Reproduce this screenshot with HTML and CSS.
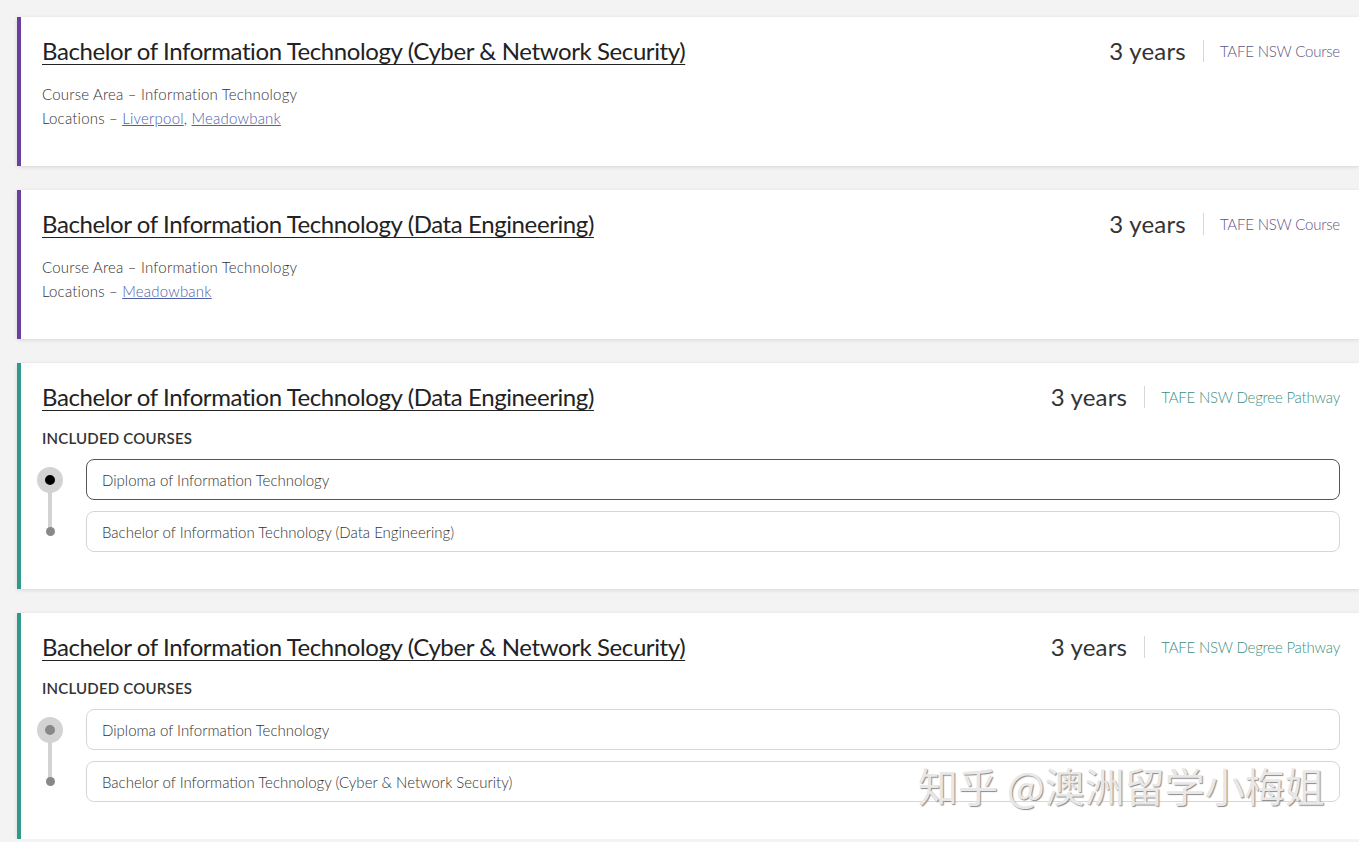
FILE: index.html
```html
<!DOCTYPE html>
<html lang="en">
<head>
    <meta charset="UTF-8">
    <meta name="viewport" content="width=device-width, initial-scale=1.0">
    <title>Courses - Information Technology</title>
    <link rel="stylesheet" href="styles.css">
</head>
<body>
    <div class="lista-cursos">

        <div class="card curso">
            <div class="card-topo">
                <a href="#" class="titulo">Bachelor of Information Technology (Cyber &amp; Network Security)</a>
                <div class="meta">
                    <span class="duracao">3 years</span>
                    <span class="tipo">TAFE NSW Course</span>
                </div>
            </div>
            <div class="detalhes">
                <p>Course Area – Information Technology</p>
                <p>Locations – <a href="#">Liverpool</a>, <a href="#">Meadowbank</a></p>
            </div>
        </div>

        <div class="card curso">
            <div class="card-topo">
                <a href="#" class="titulo">Bachelor of Information Technology (Data Engineering)</a>
                <div class="meta">
                    <span class="duracao">3 years</span>
                    <span class="tipo">TAFE NSW Course</span>
                </div>
            </div>
            <div class="detalhes">
                <p>Course Area – Information Technology</p>
                <p>Locations – <a href="#">Meadowbank</a></p>
            </div>
        </div>

        <div class="card caminho">
            <div class="card-topo">
                <a href="#" class="titulo">Bachelor of Information Technology (Data Engineering)</a>
                <div class="meta">
                    <span class="duracao">3 years</span>
                    <span class="tipo">TAFE NSW Degree Pathway</span>
                </div>
            </div>
            <h3 class="incluidos">Included courses</h3>
            <ul class="etapas">
                <li class="etapa ativa">
                    <span class="marcador"></span>
                    <div class="etapa-caixa">Diploma of Information Technology</div>
                </li>
                <li class="etapa">
                    <span class="marcador"></span>
                    <div class="etapa-caixa">Bachelor of Information Technology (Data Engineering)</div>
                </li>
            </ul>
        </div>

        <div class="card caminho">
            <div class="card-topo">
                <a href="#" class="titulo">Bachelor of Information Technology (Cyber &amp; Network Security)</a>
                <div class="meta">
                    <span class="duracao">3 years</span>
                    <span class="tipo">TAFE NSW Degree Pathway</span>
                </div>
            </div>
            <h3 class="incluidos">Included courses</h3>
            <ul class="etapas">
                <li class="etapa">
                    <span class="marcador"></span>
                    <div class="etapa-caixa">Diploma of Information Technology</div>
                </li>
                <li class="etapa">
                    <span class="marcador"></span>
                    <div class="etapa-caixa">Bachelor of Information Technology (Cyber &amp; Network Security)</div>
                </li>
            </ul>
        </div>

    </div>

    <div class="marca-agua">知乎 @澳洲留学小梅姐</div>
</body>
</html>
```

FILE: styles.css
```css
:root {
    --fundo: #f3f3f3;
    --branco: #ffffff;
    --texto: #222222;
    --texto-leve: #333333;
    --roxo: #6b3fa0;
    --roxo-leve: #5d5585;
    --verde: #2e9a8b;
    --verde-leve: #3d8f80;
    --link: #4f5fa8;
    --cinza-borda: #d6d6d6;
}

body {
    margin: 0;
    background-color: var(--fundo);
    font-family: Lato, "Noto Sans", sans-serif;
    color: var(--texto);
    overflow: hidden;
}

.lista-cursos {
    display: flex;
    flex-direction: column;
    gap: 24px;
    padding: 17px 0 0 17px;
}

.card {
    background-color: var(--branco);
    border-left: 4px solid var(--roxo);
    box-shadow: 0 1px 4px rgba(0, 0, 0, 0.12);
    padding: 20px 19px 36px 21px;
}

.card.caminho {
    border-left-color: var(--verde);
    padding-bottom: 37px;
}

.card-topo {
    display: flex;
    justify-content: space-between;
    align-items: center;
    height: 27px;
}

.titulo {
    color: var(--texto);
    font-size: 24px;
    letter-spacing: -0.4px;
    text-decoration: underline;
    text-decoration-thickness: 1px;
    text-underline-offset: 4px;
}

.meta {
    display: flex;
    align-items: center;
}

.duracao {
    font-size: 24px;
    color: #333;
    padding-right: 17px;
    border-right: 1px solid #d8d8d8;
    line-height: 22px;
    letter-spacing: 0.2px;
}

.tipo {
    font-size: 15px;
    font-weight: 300;
    letter-spacing: -0.2px;
    padding-left: 16px;
    color: var(--roxo-leve);
}

.caminho .tipo {
    color: var(--verde-leve);
}

.detalhes {
    margin-top: 18px;
    font-size: 15px;
    font-weight: 300;
    letter-spacing: 0.2px;
    color: var(--texto-leve);
    line-height: 24px;
}

.detalhes p {
    margin: 0;
}

.detalhes a {
    color: var(--link);
}

.incluidos {
    margin: 19px 0 12px;
    font-size: 15px;
    font-weight: 600;
    text-transform: uppercase;
    color: #333;
    letter-spacing: 0.2px;
}

.etapas {
    list-style: none;
    margin: 0;
    padding: 0;
    display: flex;
    flex-direction: column;
    gap: 11px;
}

.etapa {
    display: flex;
    align-items: center;
    position: relative;
}

.marcador {
    width: 26px;
    margin: 0 23px 0 -5px;
    display: flex;
    justify-content: center;
    flex-shrink: 0;
}

.marcador::before {
    content: "";
    width: 9px;
    height: 9px;
    border-radius: 50%;
    background-color: #888;
}

.etapa:first-child .marcador::before {
    width: 10px;
    height: 10px;
    border: 8px solid #d3d3d3;
    background-color: #888;
    position: relative;
    z-index: 1;
}

.etapa.ativa .marcador::before {
    background-color: #000;
}

/* linha entre os marcadores */
.etapa:first-child::after {
    content: "";
    position: absolute;
    left: 6px;
    top: 20px;
    width: 4px;
    height: 50px;
    background-color: #d3d3d3;
}

.etapa-caixa {
    flex: 1;
    border: 1px solid var(--cinza-borda);
    border-radius: 8px;
    padding: 0 15px;
    height: 39px;
    display: flex;
    align-items: center;
    font-size: 15px;
    font-weight: 300;
    color: var(--texto-leve);
}

.etapa.ativa .etapa-caixa {
    border-color: #555;
}

.marca-agua {
    position: absolute;
    left: 918px;
    top: 756px;
    font-family: "Noto Sans CJK SC", sans-serif;
    font-size: 40px;
    color: #e8e8e8;
    text-shadow: 1px 1px 1px #8a8a8a;
}
```
